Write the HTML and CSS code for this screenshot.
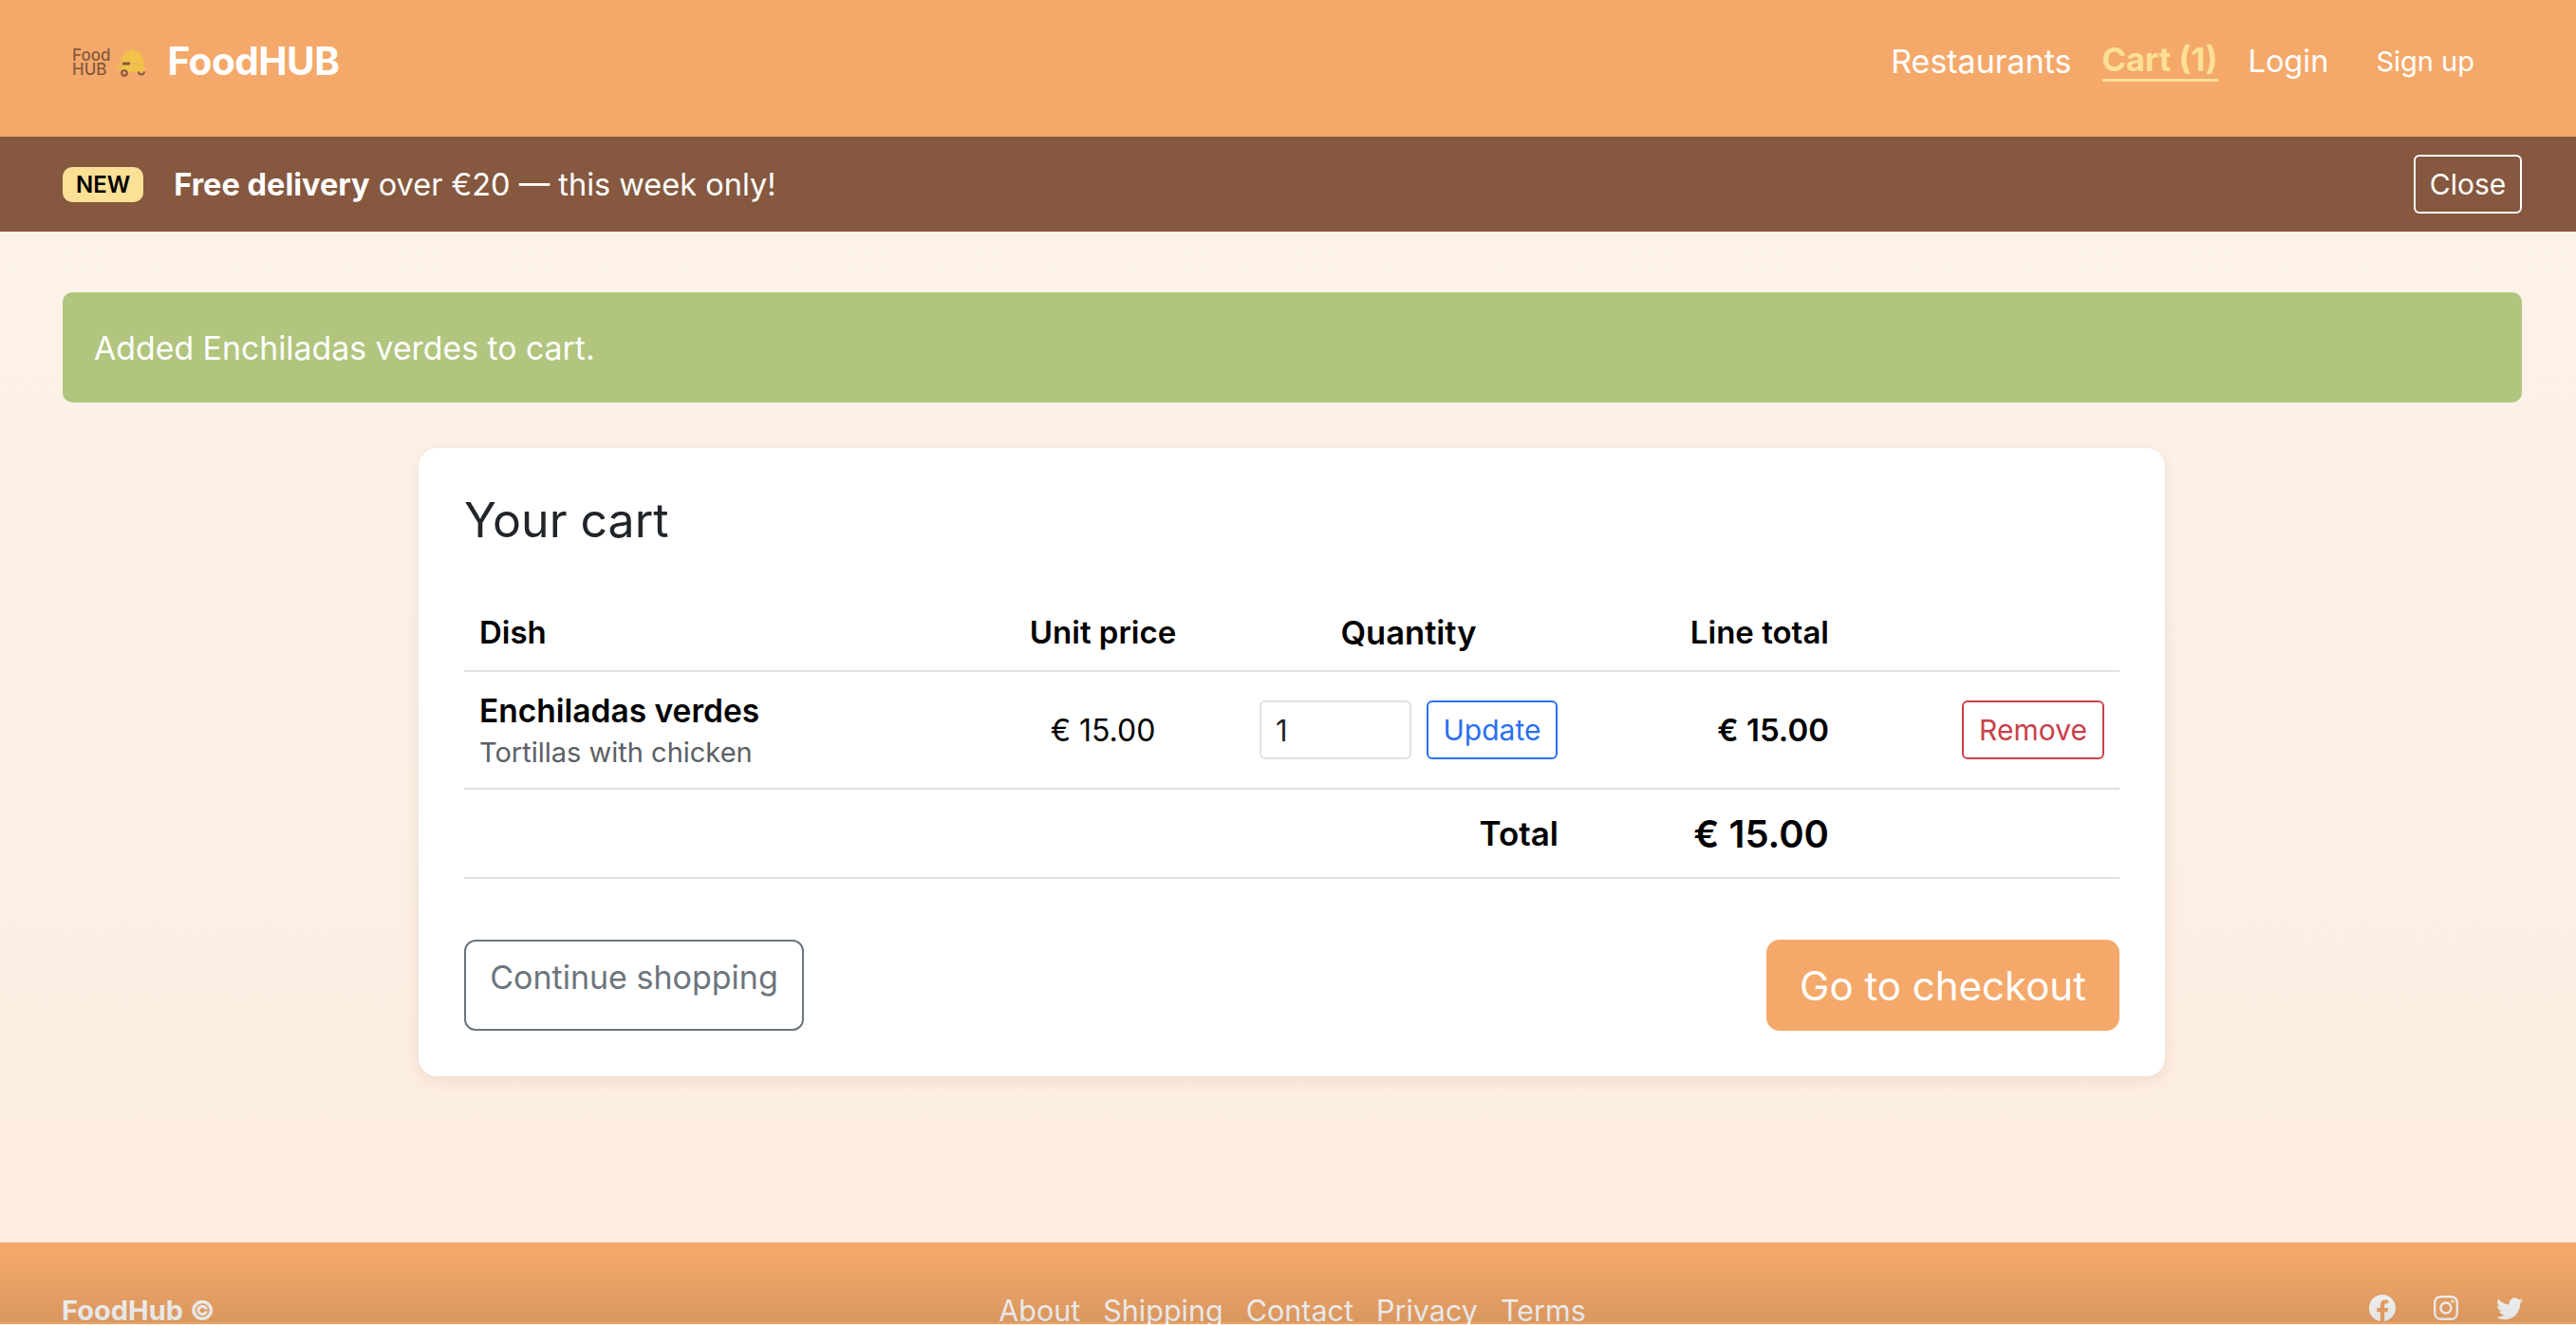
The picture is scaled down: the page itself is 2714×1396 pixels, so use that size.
FILE: index.html
```html
<!DOCTYPE html>
<html lang="en">
  <head>
    <meta charset="UTF-8" />
    <meta name="viewport" content="width=device-width, initial-scale=1.0" />
    <title>Your cart - FoodHUB</title>
    <link rel="stylesheet" href="styles.css">
  </head>
  <body>
    <header class="topbar">
      <a class="brand" href="#">
        <span class="brand-logo">
          <span class="brand-logo-text">Food<br />HUB</span>
          <svg class="brand-logo-icon" viewBox="0 0 33 30" width="33" height="30">
            <circle cx="18.500" cy="1.500" r="1.500" fill="#f0c24a" />
            <path d="M7 14a11.500 12.500 0 0 1 23 0z" fill="#f0c24a" />
            <rect x="6" y="14" width="25" height="1.500" fill="#f0c24a" />
            <path d="M7 17h16l3-1.500h3l3 6.500-2 2.500H8z" fill="#f0c24a" />
            <path d="M0 18h8v1.500H0zM3 21h6v1.500H3z" fill="#f0c24a" />
            <rect x="8" y="14.500" width="8" height="3" fill="#85583f" />
            <circle cx="10" cy="26" r="2.800" fill="none" stroke="#85583f" stroke-width="2" />
            <path d="M25 24.500a3 3 0 0 0 6 0" fill="none" stroke="#85583f" stroke-width="2" />
          </svg>
        </span>
        <span class="brand-name">FoodHUB</span>
      </a>
      <nav class="topnav">
        <a href="#">Restaurants</a>
        <a href="#" class="active">Cart (1)</a>
        <a href="#" class="login">Login</a>
        <a href="#" class="signup">Sign up</a>
      </nav>
    </header>

    <div class="promo">
      <div class="promo-text">
        <span class="promo-badge">NEW</span>
        <span><strong>Free delivery</strong> over €20 — this week only!</span>
      </div>
      <button type="button" class="promo-close">Close</button>
    </div>

    <main class="content">
      <div class="alert">Added Enchiladas verdes to cart.</div>

      <section class="card">
        <h1>Your cart</h1>
        <table class="cart">
          <thead>
            <tr>
              <th class="col-dish">Dish</th>
              <th class="col-price">Unit price</th>
              <th class="col-qty">Quantity</th>
              <th class="col-total">Line total</th>
              <th class="col-action"></th>
            </tr>
          </thead>
          <tbody>
            <tr>
              <td class="col-dish">
                <div class="dish-name">Enchiladas verdes</div>
                <div class="dish-desc">Tortillas with chicken</div>
              </td>
              <td class="col-price">€ 15.00</td>
              <td class="col-qty">
                <div class="qty-form">
                  <input type="text" class="qty-input" value="1" />
                  <button type="button" class="btn-small btn-update">Update</button>
                </div>
              </td>
              <td class="col-total line-total">€ 15.00</td>
              <td class="col-action">
                <button type="button" class="btn-small btn-remove">Remove</button>
              </td>
            </tr>
            <tr class="total-row">
              <td colspan="3" class="total-label">Total</td>
              <td class="col-total total-value">€ 15.00</td>
              <td></td>
            </tr>
          </tbody>
        </table>
        <div class="card-actions">
          <a href="#" class="btn-continue">Continue shopping</a>
          <a href="#" class="btn-checkout">Go to checkout</a>
        </div>
      </section>
    </main>

    <footer class="footer">
      <div class="footer-copy">FoodHub ©</div>
      <div class="footer-links">
        <a href="#">About</a>
        <a href="#">Shipping</a>
        <a href="#">Contact</a>
        <a href="#">Privacy</a>
        <a href="#">Terms</a>
      </div>
      <div class="footer-social">
        <svg viewBox="0 0 16 16" width="28" height="28"><path fill="currentColor" d="M16 8.049c0-4.446-3.582-8.05-8-8.05C3.580 0-.002 3.603-.002 8.050c0 4.017 2.926 7.347 6.750 7.951v-5.625h-2.030V8.050H6.750V6.275c0-2.017 1.195-3.131 3.022-3.131.876 0 1.791.157 1.791.157v1.980h-1.009c-.993 0-1.303.621-1.303 1.258v1.510h2.218l-.354 2.326H9.250V16c3.824-.604 6.750-3.934 6.750-7.951z" /></svg>
        <svg viewBox="0 0 16 16" width="26" height="26"><path fill="currentColor" d="M8 0C5.829 0 5.556.01 4.703.048 3.850.088 3.269.222 2.760.420a3.900 3.900 0 0 0-1.417.923A3.900 3.900 0 0 0 .420 2.760C.222 3.268.087 3.850.048 4.700.010 5.555 0 5.827 0 8.001c0 2.172.01 2.444.048 3.297.04.852.174 1.433.372 1.942.205.526.478.972.923 1.417.444.445.89.719 1.416.923.51.198 1.090.333 1.942.372C5.555 15.990 5.827 16 8 16s2.444-.01 3.298-.048c.851-.04 1.434-.174 1.943-.372a3.900 3.900 0 0 0 1.416-.923c.445-.445.718-.891.923-1.417.197-.509.332-1.090.372-1.942C15.990 10.445 16 10.173 16 8s-.01-2.445-.048-3.299c-.04-.851-.175-1.433-.372-1.941a3.900 3.900 0 0 0-.923-1.417A3.900 3.900 0 0 0 13.240.420c-.510-.198-1.092-.333-1.943-.372C10.443.010 10.172 0 7.998 0H8zm-.717 1.442h.718c2.136 0 2.389.007 3.232.046.780.035 1.204.166 1.486.275.373.145.640.319.920.599s.453.546.598.920c.110.281.240.705.275 1.485.039.843.047 1.096.047 3.231s-.008 2.389-.047 3.232c-.035.780-.166 1.203-.275 1.485a2.500 2.500 0 0 1-.599.919c-.28.280-.546.453-.92.598-.280.110-.704.240-1.485.276-.843.038-1.096.047-3.232.047s-2.390-.009-3.233-.047c-.780-.036-1.203-.166-1.485-.276a2.500 2.500 0 0 1-.920-.598 2.500 2.500 0 0 1-.600-.920c-.109-.281-.240-.705-.275-1.485-.038-.843-.046-1.096-.046-3.233s.008-2.388.046-3.231c.036-.780.166-1.204.276-1.486.145-.373.319-.640.599-.920s.546-.453.920-.598c.282-.110.705-.240 1.485-.276.738-.034 1.024-.044 2.515-.045zm4.988 1.328a.960.960 0 1 0 0 1.920.960.960 0 0 0 0-1.920zm-4.270 1.122a4.109 4.109 0 1 0 0 8.217 4.109 4.109 0 0 0 0-8.217zm0 1.441a2.667 2.667 0 1 1 0 5.334 2.667 2.667 0 0 1 0-5.334z" /></svg>
        <svg viewBox="0 0 16 16" width="28" height="28"><path fill="currentColor" d="M5.026 15c6.038 0 9.341-5.003 9.341-9.334 0-.140 0-.282-.006-.422A6.685 6.685 0 0 0 16 3.542a6.658 6.658 0 0 1-1.889.518 3.301 3.301 0 0 0 1.447-1.817 6.533 6.533 0 0 1-2.087.793A3.286 3.286 0 0 0 7.875 6.030a9.325 9.325 0 0 1-6.767-3.429 3.289 3.289 0 0 0 1.018 4.382A3.323 3.323 0 0 1 .640 6.575v.045a3.288 3.288 0 0 0 2.632 3.218 3.203 3.203 0 0 1-.865.115 3.230 3.230 0 0 1-.614-.057 3.283 3.283 0 0 0 3.067 2.277A6.588 6.588 0 0 1 .780 13.580a6.320 6.320 0 0 1-.780-.045A9.344 9.344 0 0 0 5.026 15z" /></svg>
      </div>
    </footer>
  </body>
</html>
```

FILE: styles.css
```css
* {
  box-sizing: border-box;
}
html,
body {
  height: 1396px;
  overflow: hidden;
}
body {
  margin: 0;
  font-family: Inter, "Noto Sans", sans-serif;
  color: #212529;
  background: linear-gradient(180deg, #fdf4eb 0%, #fcecdf 100%);
}
a {
  text-decoration: none;
  color: inherit;
}

/* header */
.topbar {
  height: 144px;
  background-color: #f4a96a;
  display: flex;
  align-items: center;
  justify-content: space-between;
  padding: 0 66px 0 76px;
}
.brand {
  display: flex;
  align-items: center;
  gap: 22px;
  margin-top: -16px;
}
.brand-logo {
  display: flex;
  align-items: center;
  gap: 5px;
  margin-top: 4px;
}
.brand-logo-text {
  font-size: 17px;
  font-weight: 500;
  line-height: 15px;
  color: #85583f;
}
.brand-name {
  font-size: 40.500px;
  font-weight: 700;
  color: #fff;
  letter-spacing: -0.5px;
}
.topnav {
  display: flex;
  align-items: center;
  gap: 32px;
  margin-top: -16px;
  padding-right: 41px;
  color: #fff;
  font-size: 34px;
}
.topnav .active {
  color: #fbe096;
  font-size: 34.500px;
  font-weight: 700;
  border-bottom: 3px solid #fbe096;
}
.topnav .login {
  font-size: 32.500px;
}
.topnav .signup {
  margin-left: 18px;
  font-size: 29px;
}

/* promo */
.promo {
  height: 100px;
  background-color: #85583f;
  color: #fff;
  display: flex;
  align-items: center;
  justify-content: space-between;
  padding: 0 57px 0 66px;
}
.promo-text {
  display: flex;
  align-items: center;
  gap: 32px;
  font-size: 32.500px;
}
.promo-badge {
  background-color: #fbe096;
  color: #000;
  font-size: 24px;
  font-weight: 600;
  border-radius: 10px;
  padding: 4px 14px;
}
.promo-close {
  font: inherit;
  font-size: 30px;
  color: #fff;
  background: transparent;
  border: 2px solid #fff;
  border-radius: 6px;
  width: 114px;
  height: 62px;
  padding: 0;
}

/* main */
.content {
  padding: 64px 57px 0 66px;
}
.alert {
  height: 116px;
  background-color: #b1c57e;
  color: #fff;
  border-radius: 10px;
  font-size: 33.800px;
  display: flex;
  align-items: center;
  padding: 0 33px;
}
.card {
  width: 1840px;
  height: 662px;
  margin: 48px 0 0 375px;
  background-color: #fff;
  border-radius: 20px;
  box-shadow: 0 4px 16px rgba(133, 88, 63, 0.12);
  padding: 46px 48px;
}
.card h1 {
  margin: 0;
  font-size: 50px;
  font-weight: 400;
  line-height: 60px;
}
.cart {
  width: 100%;
  margin-top: 53px;
  border-collapse: collapse;
  color: #000;
  font-size: 32px;
}
.cart th {
  height: 76px;
  padding-bottom: 6px;
  font-size: 33px;
  font-weight: 600;
}
.cart th.col-qty {
  font-size: 34.500px;
}
.cart thead tr,
.cart tbody tr {
  border-bottom: 2px solid #dee2e6;
}
.cart tbody tr {
  height: 124px;
}
.cart .total-row {
  height: 94px;
}
.col-dish {
  text-align: left;
  padding-left: 16px;
}
.col-price {
  width: 290px;
  text-align: center;
}
.col-qty {
  width: 354px;
  text-align: center;
}
.col-total {
  width: 267px;
  text-align: right;
}
.col-action {
  width: 305px;
  text-align: right;
  padding-right: 16px;
}
.dish-name {
  font-size: 33.500px;
  font-weight: 600;
}
.dish-desc {
  font-size: 29px;
  color: #5c6065;
  margin-top: 6px;
}
.qty-form {
  display: flex;
  justify-content: center;
  gap: 16px;
}
.qty-input {
  width: 160px;
  height: 62px;
  border: 2px solid #dee2e6;
  border-radius: 6px;
  padding: 0 15px;
  font: inherit;
  font-size: 31px;
  color: #212529;
}
.btn-small {
  font: inherit;
  font-size: 30px;
  height: 62px;
  background: #fff;
  border-radius: 6px;
  padding: 0;
}
.btn-update {
  width: 138px;
  color: #2a6ff3;
  border: 2px solid #2a6ff3;
}
.btn-remove {
  width: 150px;
  color: #c9404a;
  border: 2px solid #c9404a;
}
.line-total {
  font-size: 33px;
  font-weight: 600;
}
.total-label {
  text-align: right;
  font-size: 35px;
  font-weight: 600;
  padding-right: 19px;
}
.total-value {
  font-size: 40px;
  font-weight: 600;
}
.card-actions {
  display: flex;
  justify-content: space-between;
  margin-top: 64px;
}
.btn-continue {
  width: 358px;
  height: 96px;
  border: 2px solid #6c757d;
  border-radius: 12px;
  color: #6c757d;
  font-size: 34px;
  line-height: 51px;
  text-align: center;
  padding-top: 12px;
}
.btn-checkout {
  width: 372px;
  height: 96px;
  background-color: #f4a96a;
  color: #fff;
  border-radius: 14px;
  font-size: 42px;
  display: flex;
  align-items: center;
  justify-content: center;
}

/* footer */
.footer {
  position: relative;
  margin-top: 175px;
  height: 86px;
  background-color: #f4a96a;
  color: #fff;
  display: grid;
  grid-template-columns: 1fr auto 1fr;
  align-items: end;
  padding: 0 56px 0 65px;
  font-size: 30.500px;
}
/* the darkening at the bottom edge also covers the footer text */
.footer::after {
  content: "";
  position: absolute;
  inset: 0;
  background: linear-gradient(180deg, rgba(0, 0, 0, 0) 15%, rgba(0, 0, 0, 0.11) 97.500%, rgba(0, 0, 0, 0.04) 97.500%);
}
.footer-copy {
  font-size: 29px;
  font-weight: 700;
  line-height: 44px;
  margin-bottom: -8px;
}
.footer-links {
  display: flex;
  gap: 24px;
  line-height: 44px;
  margin-bottom: -8px;
}
.footer-social {
  display: flex;
  justify-content: flex-end;
  align-items: center;
  gap: 40px;
  margin-bottom: 3px;
}
```
